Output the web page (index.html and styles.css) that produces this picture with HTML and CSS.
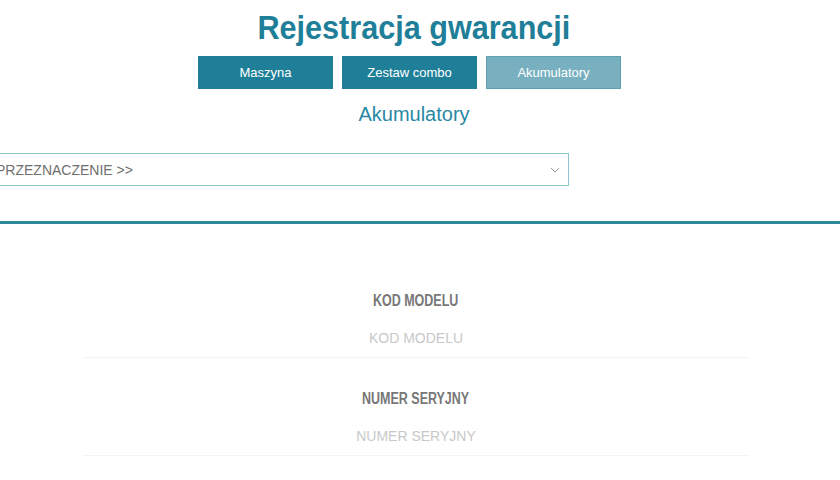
FILE: index.html
```html
<!DOCTYPE html>
<html lang="pl">
<head>
    <meta charset="UTF-8">
    <meta name="viewport" content="width=device-width, initial-scale=1.0">
    <link rel="stylesheet" href="styles.css">
    <title>Rejestracja gwarancji</title>
</head>
<body class="regbody">
    <div class="regpage">
        <h1 class="regh1"><span class="narrow">Rejestracja gwarancji</span></h1>
        <div class="tabs">
            <button class="tab">Maszyna</button>
            <button class="tab">Zestaw combo</button>
            <button class="tab tab-active">Akumulatory</button>
        </div>
        <h2 class="regh2">Akumulatory</h2>
        <div class="selectrow">
            <div class="selectbox">
                <span>PRZEZNACZENIE &gt;&gt;</span>
                <svg class="chev" width="10" height="6" viewBox="0 0 10 6"><path d="M1 1 L5 5 L9 1" fill="none" stroke="#9a9a9a" stroke-width="1"/></svg>
            </div>
        </div>
        <hr class="divider">
        <form class="regform">
            <label class="field">
                <span class="fieldlabel"><span class="narrow">KOD MODELU</span></span>
                <input type="text" placeholder="KOD MODELU">
            </label>
            <label class="field">
                <span class="fieldlabel"><span class="narrow">NUMER SERYJNY</span></span>
                <input type="text" placeholder="NUMER SERYJNY">
            </label>
        </form>
    </div>
</body>
</html>
```

FILE: styles.css
```css
*{
    margin: 0;
    padding: 0;
    box-sizing: border-box;
}
:root{
    --teal: #1f7f99;
    --teal-light: #78b0c0;
    --gray: #777;
}
.regbody{
    background: #fff;
    font-family: "Liberation Sans", Arial, sans-serif;
    overflow: hidden;
}
.regpage{
    width: 828px;
}
.narrow{
    display: inline-block;
    transform: scaleX(0.9);
}
.regh1{
    text-align: center;
    font-size: 34px;
    font-weight: bold;
    color: var(--teal);
    padding-top: 7px;
    height: 56px;
    line-height: 40px;
}
.tabs{
    display: flex;
    justify-content: center;
    gap: 9px;
    padding-right: 9px;
}
.tab{
    width: 135px;
    height: 33px;
    border: none;
    background: var(--teal);
    color: #fff;
    font-family: "Liberation Sans", Arial, sans-serif;
    font-size: 13px;
}
.tab-active{
    background: var(--teal-light);
    border: 1px solid #5e9fb2;
}
.regh2{
    text-align: center;
    font-weight: normal;
    font-size: 20px;
    color: #2a88a3;
    padding-top: 14px;
    height: 64px;
}
.selectrow{
    margin-left: -13px;
    height: 68px;
}
.selectbox{
    width: 582px;
    height: 33px;
    border: 1px solid #8cc4cf;
    display: flex;
    align-items: center;
    justify-content: space-between;
    padding: 0 8px;
    font-size: 14px;
    color: #6f6f6f;
}
.chev{
    margin-top: 1px;
}
.divider{
    border: none;
    height: 3px;
    background: #2c8a9c;
    width: 840px;
}
.regform{
    display: flex;
    flex-direction: column;
    align-items: center;
    padding-top: 68px;
    padding-left: 4px;
}
.field{
    display: flex;
    flex-direction: column;
    align-items: center;
    width: 666px;
    height: 98px;
}
.fieldlabel{
    font-weight: bold;
    font-size: 16px;
    color: var(--gray);
    height: 31px;
}
.fieldlabel .narrow{
    transform: scaleX(0.78);
}
.field input{
    width: 100%;
    border: none;
    border-bottom: 1px solid #f4f4f4;
    outline: none;
    text-align: center;
    font-family: "Liberation Sans", Arial, sans-serif;
    font-size: 14px;
    padding: 7px 0 11px;
    background: transparent;
}
.field input::placeholder{
    color: #c8c8c8;
}
```
